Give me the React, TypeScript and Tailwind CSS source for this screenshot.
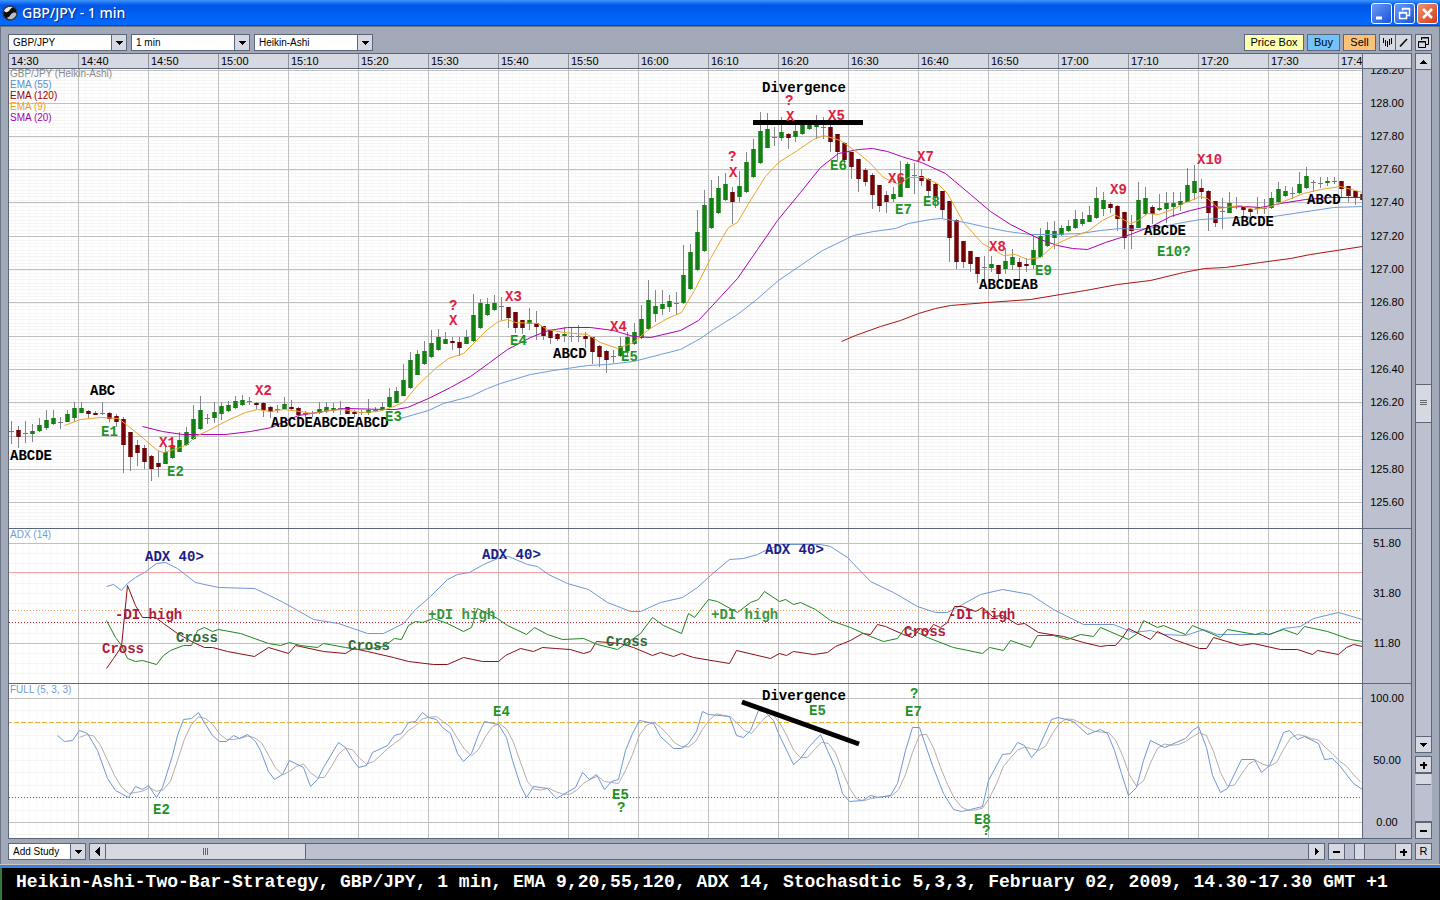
import { useState, type ReactNode } from 'react';

type Point = [number, number];
type Candle = [string, number, number, number, number];
type Note = [string, number, number, string];

const RED = '#e0203f';
const GREEN = '#1f941f';
const BLACK = '#000000';
const NAVY = '#1c1c8a';
const MAROON = '#b01c3c';
const LEAF = '#3a9442';
const PINE = '#2f6b38';

const STEP = 7;
const PLOT_LEFT = 9;
const MAJOR = '#c0c0c0';
const MINOR = '#f5f5f5';

const times = [
  '14:30', '14:40', '14:50', '15:00', '15:10', '15:20', '15:30', '15:40', '15:50', '16:00',
  '16:10', '16:20', '16:30', '16:40', '16:50', '17:00', '17:10', '17:20', '17:30', '17:40',
];

// kind (g up, r down, d doji), wick top, body top, body bottom, wick bottom
const candles: Candle[] = [
  ['d', 421, 431, 432, 444], ['r', 426, 430, 437, 448], ['d', 421, 433, 434, 443], ['g', 424, 431, 434, 442],
  ['g', 418, 425, 431, 432], ['g', 410, 420, 428, 430], ['g', 410, 418, 424, 425], ['d', 417, 422, 423, 429],
  ['g', 410, 414, 422, 422], ['g', 402, 408, 418, 422], ['g', 402, 408, 413, 413], ['r', 410, 411, 414, 418],
  ['r', 411, 413, 415, 415], ['d', 402, 413, 414, 415], ['r', 412, 413, 419, 422], ['r', 414, 416, 422, 427],
  ['r', 417, 419, 445, 473], ['r', 432, 432, 457, 471], ['r', 440, 445, 453, 466], ['r', 445, 448, 462, 469],
  ['r', 455, 456, 469, 481], ['r', 451, 463, 467, 477], ['g', 445, 452, 464, 464], ['g', 441, 445, 458, 459],
  ['g', 432, 440, 452, 452], ['g', 427, 432, 445, 446], ['g', 405, 419, 439, 440], ['g', 396, 410, 429, 430],
  ['d', 414, 418, 419, 424], ['g', 402, 412, 418, 423], ['g', 402, 406, 414, 420], ['g', 401, 405, 411, 412],
  ['g', 396, 401, 408, 409], ['g', 395, 400, 405, 406], ['d', 397, 401, 402, 405], ['r', 402, 403, 405, 409],
  ['r', 402, 403, 410, 417], ['r', 406, 407, 412, 418], ['d', 405, 409, 410, 413], ['g', 397, 404, 409, 410],
  ['r', 400, 407, 409, 411], ['r', 407, 408, 415, 417], ['d', 411, 413, 414, 417], ['d', 411, 413, 414, 417],
  ['g', 402, 409, 413, 414], ['g', 402, 407, 411, 413], ['g', 403, 408, 410, 413], ['d', 401, 408, 409, 415],
  ['r', 407, 407, 414, 414], ['r', 410, 412, 414, 417], ['d', 410, 412, 413, 415], ['g', 399, 410, 413, 415],
  ['d', 407, 410, 411, 412], ['g', 402, 407, 409, 411], ['g', 388, 397, 407, 408], ['g', 387, 391, 403, 403],
  ['g', 364, 380, 396, 396], ['g', 352, 360, 388, 389], ['g', 350, 354, 375, 375], ['g', 341, 351, 364, 365],
  ['g', 330, 343, 357, 358], ['g', 329, 337, 350, 351], ['g', 332, 339, 344, 344], ['r', 337, 341, 343, 350],
  ['r', 337, 342, 348, 356], ['g', 330, 337, 344, 344], ['g', 294, 315, 341, 342], ['g', 299, 303, 328, 329],
  ['g', 298, 304, 315, 316], ['g', 295, 303, 310, 311], ['d', 297, 306, 307, 320], ['r', 307, 307, 318, 328],
  ['r', 312, 312, 328, 333], ['r', 320, 320, 328, 334], ['g', 308, 320, 324, 330], ['r', 311, 323, 327, 340],
  ['r', 326, 326, 336, 340], ['r', 330, 330, 338, 344], ['r', 333, 334, 339, 341], ['g', 327, 334, 336, 342],
  ['d', 328, 336, 337, 342], ['d', 325, 336, 337, 342], ['r', 332, 336, 339, 348], ['r', 337, 337, 352, 364],
  ['r', 345, 346, 357, 367], ['r', 350, 351, 360, 373], ['d', 350, 356, 357, 363], ['g', 337, 346, 356, 357],
  ['g', 332, 337, 351, 356], ['g', 323, 332, 344, 345], ['g', 305, 319, 338, 339], ['g', 280, 300, 329, 330],
  ['g', 290, 306, 314, 322], ['g', 290, 304, 309, 315], ['g', 295, 301, 307, 312], ['d', 292, 303, 304, 315],
  ['g', 245, 275, 303, 304], ['g', 244, 252, 289, 290], ['g', 210, 232, 270, 271], ['g', 190, 205, 251, 252],
  ['g', 180, 198, 228, 229], ['g', 176, 188, 213, 214], ['g', 173, 184, 200, 201], ['r', 187, 192, 202, 224],
  ['g', 171, 186, 197, 202], ['g', 152, 162, 192, 193], ['g', 139, 149, 177, 178], ['g', 112, 131, 163, 164],
  ['g', 113, 129, 148, 148], ['d', 127, 137, 138, 146], ['g', 117, 132, 138, 141], ['r', 133, 134, 138, 149],
  ['g', 120, 131, 137, 142], ['g', 120, 123, 134, 135], ['g', 120, 124, 129, 130], ['g', 115, 125, 127, 139],
  ['d', 117, 127, 128, 139], ['r', 125, 127, 142, 152], ['r', 134, 134, 152, 160], ['r', 142, 143, 160, 167],
  ['r', 152, 152, 167, 179], ['r', 159, 159, 179, 192], ['r', 168, 170, 182, 186], ['r', 173, 175, 195, 209],
  ['r', 185, 185, 206, 212], ['r', 191, 195, 202, 213], ['g', 187, 194, 199, 202], ['g', 161, 177, 197, 197],
  ['g', 162, 164, 188, 188], ['d', 163, 175, 176, 194], ['r', 169, 176, 181, 186], ['r', 178, 179, 191, 198],
  ['r', 183, 184, 198, 208], ['r', 191, 191, 210, 218], ['r', 201, 201, 238, 262], ['r', 219, 220, 262, 269],
  ['r', 241, 241, 262, 268], ['r', 251, 251, 264, 272], ['r', 257, 257, 274, 283], ['d', 256, 267, 268, 282],
  ['g', 256, 264, 268, 272], ['r', 265, 265, 274, 282], ['g', 248, 261, 269, 274], ['g', 249, 257, 265, 270],
  ['r', 258, 262, 267, 280], ['r', 258, 264, 266, 272], ['g', 236, 250, 265, 269], ['g', 228, 236, 257, 258],
  ['g', 222, 230, 246, 247], ['g', 221, 231, 238, 249], ['g', 225, 228, 235, 236], ['g', 220, 226, 231, 232],
  ['g', 210, 219, 228, 229], ['g', 212, 219, 224, 226], ['g', 206, 215, 222, 222], ['g', 187, 198, 218, 219],
  ['g', 192, 200, 209, 216], ['r', 202, 204, 208, 213], ['r', 205, 206, 219, 231], ['r', 212, 212, 238, 249],
  ['r', 215, 225, 231, 249], ['g', 182, 200, 228, 228], ['g', 187, 198, 214, 215], ['r', 205, 207, 214, 224],
  ['g', 194, 208, 210, 211], ['g', 192, 203, 209, 223], ['g', 192, 203, 207, 217], ['g', 192, 201, 205, 211],
  ['g', 168, 185, 202, 202], ['g', 165, 181, 193, 200], ['r', 179, 188, 192, 199], ['r', 190, 191, 213, 231],
  ['r', 201, 201, 223, 227], ['d', 198, 211, 212, 229], ['g', 192, 203, 213, 213], ['d', 197, 206, 207, 209],
  ['r', 206, 207, 210, 216], ['r', 208, 209, 212, 216], ['d', 197, 208, 209, 214], ['d', 199, 208, 209, 214],
  ['g', 192, 198, 208, 209], ['g', 182, 189, 202, 203], ['g', 186, 191, 196, 197], ['d', 187, 193, 194, 199],
  ['g', 172, 184, 193, 194], ['g', 167, 176, 188, 189], ['d', 180, 182, 183, 192], ['d', 177, 183, 184, 188],
  ['g', 177, 181, 183, 186], ['d', 177, 181, 182, 184], ['r', 181, 181, 189, 198], ['r', 186, 186, 196, 202],
  ['r', 190, 191, 198, 205], ['r', 194, 194, 200, 200],
];

const ema9: Point[] = [
  [64, 425], [80, 419], [100, 417], [118, 418], [127, 425], [143, 438], [157, 450], [163, 452], [177, 448],
  [187, 444], [195, 436], [208, 430], [227, 420], [245, 412], [257, 409], [270, 411], [283, 409], [300, 411],
  [313, 413], [328, 410], [343, 409], [360, 412], [377, 411], [388, 408], [403, 402], [417, 385], [435, 368],
  [448, 358], [463, 353], [473, 343], [487, 329], [498, 321], [507, 319], [515, 322], [537, 323], [547, 329],
  [563, 332], [587, 334], [600, 342], [617, 348], [633, 342], [647, 330], [653, 326], [667, 318], [681, 312],
  [695, 288], [710, 258], [722, 237], [728, 227], [737, 222], [748, 203], [765, 176], [778, 162], [797, 150],
  [813, 139], [823, 135], [840, 140], [857, 152], [870, 163], [883, 177], [898, 184], [908, 177], [923, 177],
  [937, 183], [947, 193], [963, 222], [982, 243], [1003, 255], [1015, 254], [1027, 259], [1040, 257],
  [1053, 245], [1070, 237], [1087, 231], [1102, 220], [1114, 214], [1130, 223], [1138, 220], [1147, 213],
  [1158, 214], [1175, 208], [1183, 203], [1200, 196], [1207, 198], [1218, 208], [1240, 205], [1253, 209],
  [1267, 207], [1283, 201], [1303, 193], [1320, 189], [1340, 186], [1362, 192],
];

const sma20: Point[] = [
  [142, 426], [162, 431], [182, 434], [225, 434], [250, 431], [271, 427], [298, 415], [330, 410], [345, 408],
  [385, 409], [395, 409], [407, 407], [428, 398], [450, 387], [470, 376], [488, 363], [507, 349], [530, 337],
  [548, 330], [567, 327], [590, 327], [613, 330], [633, 336], [650, 337], [680, 330], [698, 320], [712, 305],
  [737, 278], [757, 249], [777, 220], [800, 192], [820, 167], [838, 153], [858, 149], [872, 148], [887, 151],
  [901, 156], [921, 162], [945, 173], [970, 194], [990, 211], [1010, 224], [1040, 239], [1057, 245],
  [1072, 248], [1087, 249], [1105, 242], [1130, 234], [1153, 225], [1170, 216], [1190, 210], [1207, 206],
  [1225, 207], [1243, 206], [1260, 207], [1280, 203], [1305, 199], [1330, 197], [1362, 197],
];

const ema55: Point[] = [
  [400, 418], [428, 410], [443, 403], [470, 396], [487, 388], [500, 383], [530, 374], [553, 370], [587, 365],
  [607, 364], [633, 361], [660, 354], [680, 349], [700, 338], [713, 329], [737, 314], [755, 300], [778, 280],
  [800, 265], [822, 250], [853, 235], [873, 231], [895, 228], [908, 223], [930, 219], [940, 218], [965, 222],
  [987, 227], [1007, 231], [1030, 234], [1053, 234], [1080, 233], [1100, 230], [1120, 228], [1137, 229],
  [1163, 226], [1177, 223], [1200, 219], [1237, 217], [1273, 216], [1300, 212], [1333, 207], [1362, 206],
];

const ema120: Point[] = [
  [841, 341], [855, 335], [880, 326], [900, 320], [918, 313], [935, 308], [950, 305], [987, 302], [1030, 299],
  [1060, 294], [1085, 290], [1117, 284], [1150, 280], [1183, 272], [1204, 268], [1225, 267], [1260, 262],
  [1290, 258], [1310, 254], [1362, 246],
];

const adx: Point[] = [
  [106, 586], [113, 584], [121, 590], [127, 583], [135, 577], [144, 572], [156, 563], [165, 562], [177, 568],
  [195, 582], [218, 587], [254, 588], [267, 594], [283, 602], [313, 619], [338, 623], [367, 633], [383, 633],
  [403, 623], [415, 609], [430, 596], [447, 579], [457, 574], [469, 572], [483, 564], [497, 558], [508, 556],
  [527, 564], [537, 566], [548, 574], [567, 583], [588, 589], [607, 602], [630, 611], [640, 611], [660, 602],
  [682, 597], [697, 587], [710, 575], [729, 559], [743, 558], [757, 554], [765, 550], [780, 544], [820, 544],
  [830, 546], [847, 557], [870, 581], [893, 592], [917, 606], [935, 612], [947, 612], [962, 604], [980, 594],
  [1002, 589], [1030, 594], [1053, 609], [1083, 624], [1113, 624], [1133, 632], [1150, 630], [1163, 634],
  [1185, 635], [1203, 629], [1217, 634], [1253, 634], [1270, 634], [1283, 628], [1300, 626], [1313, 618],
  [1338, 612], [1362, 619],
];

const minusDi: Point[] = [
  [106, 668], [113, 658], [121, 646], [127, 585], [135, 605], [142, 617], [155, 617], [163, 623], [177, 633],
  [193, 642], [204, 647], [212, 647], [227, 651], [254, 656], [268, 647], [288, 653], [295, 645], [323, 651],
  [345, 653], [353, 648], [367, 651], [393, 657], [408, 661], [433, 664], [447, 664], [463, 657], [482, 661],
  [498, 661], [505, 655], [520, 648], [533, 651], [542, 647], [555, 648], [570, 649], [583, 653], [590, 651],
  [596, 641], [620, 643], [633, 647], [652, 655], [660, 652], [673, 656], [681, 653], [693, 657], [729, 663],
  [736, 650], [770, 658], [779, 653], [786, 655], [793, 651], [813, 654], [827, 652], [835, 646], [850, 640],
  [862, 633], [870, 634], [877, 624], [885, 626], [903, 634], [912, 637], [920, 628], [927, 632], [933, 624],
  [940, 627], [947, 622], [954, 606], [962, 606], [975, 611], [982, 607], [992, 616], [1002, 615], [1017, 624],
  [1024, 623], [1038, 632], [1063, 636], [1083, 642], [1100, 646], [1107, 645], [1115, 645], [1122, 637],
  [1128, 628], [1150, 639], [1157, 631], [1173, 639], [1199, 648], [1206, 648], [1213, 637], [1240, 645],
  [1253, 643], [1280, 649], [1297, 649], [1312, 654], [1317, 650], [1338, 654], [1346, 647], [1353, 644],
  [1362, 646],
];

const plusDi: Point[] = [
  [106, 620], [115, 637], [121, 645], [127, 658], [135, 661], [142, 660], [156, 664], [163, 655], [170, 650],
  [183, 645], [191, 645], [197, 630], [204, 627], [212, 631], [218, 629], [240, 633], [268, 643], [280, 645],
  [289, 642], [300, 645], [317, 647], [323, 643], [345, 647], [357, 649], [370, 648], [383, 646], [394, 638],
  [401, 639], [408, 625], [415, 621], [422, 622], [433, 618], [447, 623], [463, 631], [471, 627], [477, 608],
  [497, 618], [507, 625], [526, 634], [534, 627], [547, 634], [562, 639], [583, 638], [597, 644], [617, 649],
  [630, 640], [640, 633], [652, 617], [663, 625], [681, 633], [688, 613], [694, 617], [708, 599], [717, 601],
  [737, 612], [750, 602], [758, 599], [764, 591], [779, 601], [785, 599], [793, 604], [800, 602], [815, 609],
  [830, 620], [850, 627], [870, 636], [883, 641], [897, 638], [905, 627], [917, 632], [927, 637], [953, 647],
  [982, 653], [989, 647], [1003, 650], [1010, 640], [1030, 647], [1037, 635], [1053, 635], [1067, 639],
  [1080, 634], [1093, 636], [1100, 627], [1128, 639], [1137, 633], [1143, 620], [1157, 627], [1163, 625],
  [1185, 634], [1192, 625], [1220, 637], [1227, 629], [1255, 634], [1262, 632], [1268, 634], [1283, 629],
  [1297, 634], [1304, 626], [1327, 631], [1350, 639], [1362, 641],
];

const stochK: Point[] = [
  [57, 735], [64, 741], [72, 740], [79, 730], [87, 733], [97, 750], [107, 778], [115, 790], [128, 797],
  [135, 786], [142, 789], [148, 785], [156, 797], [162, 787], [172, 755], [177, 735], [183, 719], [191, 718],
  [198, 712], [205, 724], [212, 735], [219, 741], [226, 741], [233, 735], [239, 738], [247, 734], [255, 741],
  [260, 750], [268, 771], [274, 779], [282, 774], [289, 760], [303, 767], [310, 786], [317, 779], [323, 767],
  [338, 742], [345, 747], [352, 759], [358, 767], [366, 765], [372, 752], [387, 745], [394, 735], [401, 733],
  [408, 722], [415, 721], [422, 712], [428, 717], [436, 719], [442, 727], [450, 733], [457, 753], [463, 761],
  [471, 753], [478, 734], [484, 721], [498, 724], [506, 737], [512, 760], [520, 785], [526, 797], [533, 786],
  [547, 788], [556, 798], [568, 791], [575, 787], [582, 772], [589, 779], [596, 774], [604, 789], [611, 781],
  [618, 779], [625, 750], [632, 733], [639, 720], [653, 723], [660, 736], [673, 748], [681, 748], [688, 743],
  [696, 731], [702, 711], [708, 714], [729, 716], [736, 735], [743, 737], [750, 730], [758, 710], [765, 712],
  [773, 720], [778, 733], [793, 764], [800, 758], [808, 747], [820, 734], [827, 750], [835, 768], [842, 793],
  [849, 801], [862, 800], [870, 795], [878, 797], [890, 795], [897, 783], [905, 750], [912, 727], [919, 727],
  [932, 765], [943, 793], [953, 809], [961, 811], [970, 809], [982, 806], [988, 780], [1002, 754], [1010, 753],
  [1017, 742], [1024, 745], [1031, 757], [1037, 750], [1051, 719], [1058, 717], [1073, 721], [1087, 734],
  [1100, 729], [1107, 733], [1114, 750], [1121, 773], [1128, 795], [1136, 787], [1143, 760], [1150, 740],
  [1164, 747], [1185, 738], [1192, 730], [1198, 726], [1206, 747], [1212, 775], [1220, 792], [1227, 788],
  [1241, 759], [1254, 759], [1261, 772], [1269, 765], [1276, 750], [1283, 732], [1289, 730], [1297, 739],
  [1304, 736], [1318, 743], [1324, 759], [1332, 758], [1339, 765], [1353, 783], [1362, 789],
];

const priceNotes: Note[] = [
  ['ABCDE', 10, 460, BLACK], ['ABC', 90, 395, BLACK], ['E1', 101, 436, GREEN], ['X1', 159, 447, RED],
  ['E2', 167, 476, GREEN], ['X2', 255, 395, RED], ['ABCDEABCDEABCD', 271, 427, BLACK], ['E3', 385, 421, GREEN],
  ['?', 449, 310, RED], ['X', 449, 325, RED], ['X3', 505, 301, RED], ['E4', 510, 345, GREEN],
  ['ABCD', 553, 358, BLACK], ['X4', 610, 331, RED], ['E5', 621, 361, GREEN], ['Divergence', 762, 92, BLACK],
  ['?', 785, 105, RED], ['?', 728, 161, RED], ['X', 729, 177, RED],
  ['X5', 828, 120, RED], ['E6', 830, 170, GREEN], ['X6', 888, 183, RED], ['X7', 917, 161, RED],
  ['E7', 895, 214, GREEN], ['E8', 923, 206, GREEN], ['X8', 989, 251, RED], ['E9', 1035, 275, GREEN],
  ['ABCDEAB', 979, 289, BLACK], ['X9', 1110, 194, RED], ['ABCDE', 1144, 235, BLACK],
  ['E10?', 1157, 256, GREEN], ['X10', 1197, 164, RED], ['ABCDE', 1232, 226, BLACK], ['ABCD', 1307, 204, BLACK],
  ['X', 786, 121, RED],
];

const adxNotes: Note[] = [
  ['ADX 40>', 145, 561, NAVY], ['ADX 40>', 482, 559, NAVY], ['ADX 40>', 765, 554, NAVY],
  ['-DI high', 115, 619, MAROON], ['Cross', 102, 653, MAROON], ['Cross', 176, 642, PINE],
  ['Cross', 348, 650, PINE], ['+DI high', 428, 619, LEAF], ['Cross', 606, 646, PINE],
  ['+DI high', 711, 619, LEAF], ['Cross', 904, 636, MAROON], ['-DI high', 948, 619, MAROON],
];

const stochNotes: Note[] = [
  ['E2', 153, 814, GREEN], ['E4', 493, 716, GREEN], ['E5', 612, 799, GREEN], ['?', 617, 812, GREEN],
  ['Divergence', 762, 700, BLACK], ['E5', 809, 715, GREEN], ['?', 910, 698, GREEN], ['E7', 905, 716, GREEN],
  ['E8', 974, 824, GREEN], ['?', 982, 835, GREEN],
];

const priceLevels = [
  70, 103, 136, 169, 202, 236, 269, 302, 336, 369, 402, 436, 469, 502,
].map((y, i) => ({ y, label: (128.2 - i * 0.2).toFixed(2) }));

const toPath = (points: Point[]) => points.map(([x, y], i) => `${i ? 'L' : 'M'}${x + 0.5} ${y + 0.5}`).join('');

const valueAt = (points: Point[], x: number) => {
  const i = Math.max(1, points.findIndex((p) => p[0] >= x));
  const [x0, y0] = points[i - 1];
  const [x1, y1] = points[i];
  return y0 + ((x - x0) / (x1 - x0)) * (y1 - y0);
};

// %D is the 3-bar average of %K
const stochD: Point[] = [];
for (let x = 79; x <= 1362; x += STEP) {
  stochD.push([x, (valueAt(stochK, x) + valueAt(stochK, x - STEP) + valueAt(stochK, x - 2 * STEP)) / 3]);
}

const range = (n: number) => Array.from({ length: n }, (_, i) => i);

function Line({ points, color }: { points: Point[]; color: string }) {
  return <path d={toPath(points)} fill="none" stroke={color} strokeWidth="1" />;
}

function Level({ y, color, dash }: { y: number; color: string; dash?: string }) {
  return <path d={`M0 ${y + 0.5}H4000`} stroke={color} strokeDasharray={dash} />;
}

function Notes({ items }: { items: Note[] }) {
  return (
    <g className="font-['Liberation_Mono',monospace] text-sm font-bold">
      {items.map(([text, x, y, color]) => (
        <text key={`${x}-${y}`} x={x} y={y} fill={color}>{text}</text>
      ))}
    </g>
  );
}

function CandleBar({ candle, x }: { candle: Candle; x: number }) {
  const [kind, high, top, bottom, low] = candle;
  const height = Math.max(2, bottom - top);
  const up = kind === 'g';
  return (
    <g shapeRendering="crispEdges">
      <rect x={x} y={high} width="1" height={low - high} fill="#85858d" />
      {kind === 'd' ? (
        <rect x={x - 2} y={top} width="5" height="1" fill="#77777f" />
      ) : (
        <>
          <rect x={x - 2} y={top} width="5" height={height} fill={up ? '#4f964f' : '#8c4648'} />
          <rect x={x - 1} y={top} width="3" height={height} fill={up ? '#0f820f' : '#760004'} />
        </>
      )}
    </g>
  );
}

interface PanelProps {
  title: string;
  top: number;
  levels: { y: number; label: string; line?: boolean }[];
  minorStep: number;
  className: string;
  children: ReactNode;
}

function Panel({ title, top, levels, minorStep, className, children }: PanelProps) {
  return (
    <section className={`flex border-b border-[#5b667b] ${className}`} aria-label={title}>
      <div className="min-w-0 flex-1 overflow-hidden bg-white">
        <svg className="block h-full w-full" role="img" aria-label={title}>
          <g transform={`translate(${-PLOT_LEFT} ${-top})`}>
            {range(200).map((i) => (
              <path key={i} d={`M${15.5 + i * STEP} ${top}v1000`} stroke={MINOR} strokeOpacity="0.6" />
            ))}
            {range(Math.ceil(460 / minorStep)).map((i) => (
              <path key={i} d={`M0 ${Math.round(levels[0].y + i * minorStep) + 0.5}H4000`} stroke={MINOR} />
            ))}
            {range(19).map((i) => (
              <path key={i} d={`M${78.5 + i * 70} ${top}v1000`} stroke={MAJOR} />
            ))}
            {levels.filter((l) => l.line !== false).map((l) => <Level key={l.y} y={l.y} color={MAJOR} />)}
            {children}
          </g>
        </svg>
      </div>
      <div className="w-[49px] border-l border-[#5b667b] bg-[#bcc0cf]">
        <svg className="block h-full w-full text-[11px]">
          {levels.map((l) => (
            <text key={l.y} x="24" y={l.y - top + 4} textAnchor="middle">{l.label}</text>
          ))}
        </svg>
      </div>
    </section>
  );
}

function Arrow({ d }: { d: string }) {
  return (
    <svg width="9" height="9" viewBox="0 0 9 9" shapeRendering="crispEdges"><path d={d} /></svg>
  );
}

const UP = 'M1 7L4.5 2.5L8 7Z';
const DOWN = 'M0 2.5H9L4.5 7Z';
const LEFT = 'M6.500 0V9L2 4.500Z';
const RIGHT = 'M2.500 0V9L7 4.500Z';
const PLUS = 'M1 4h7v2H1zM3.500 1.500h2v7h-2z';
const MINUS = 'M1 4h7v2H1z';

interface DropDownProps {
  label: string;
  options: string[];
  className: string;
}

function DropDown({ label, options, className }: DropDownProps) {
  const [value, setValue] = useState(options[0]);
  return (
    <div className={`relative h-[17px] border border-[#5b667b] bg-white ${className}`}>
      <select
        aria-label={label}
        value={value}
        onChange={(e) => setValue(e.target.value)}
        className="block h-full w-full appearance-none pl-1 text-[10px] leading-[15px] outline-none"
      >
        {options.map((o) => <option key={o}>{o}</option>)}
      </select>
      <span className="pointer-events-none absolute inset-y-0 right-0 flex w-[15px] items-center justify-center border-l border-[#5b667b] bg-[#d6d9e1]">
        <Arrow d={DOWN} />
      </span>
    </div>
  );
}

function SmallButton({ label, children }: { label: string; children: ReactNode }) {
  return (
    <button aria-label={label} className="flex size-[17px] shrink-0 items-center justify-center border border-[#5b667b] bg-[#d6d9e1] hover:bg-white">
      {children}
    </button>
  );
}

function WindowButton({ label, className, children }: { label: string; className: string; children: ReactNode }) {
  return (
    <button aria-label={label} className={`flex size-[21px] items-center justify-center rounded-[3px] border border-white ${className}`}>
      <svg width="19" height="19" viewBox="0 0 19 19" fill="none" stroke="white">{children}</svg>
    </button>
  );
}

function TitleBar() {
  return (
    <header className="flex h-[26px] shrink-0 items-center justify-between bg-linear-to-b from-[#3d95ff] via-[#0055e5] via-20% to-[#0468ff] to-85% pr-0.5 pl-0.5 shadow-[inset_0_-1px_0_#0046c8]">
      <div className="flex items-center gap-1">
        <svg width="16" height="16" viewBox="0 0 16 16">
          <circle cx="8" cy="8" r="7.500" fill="#0a0a0a" />
          <path d="M2 5.500C4 2 8 1 11 2.500C8 3 8 6 5.500 7C4 7.600 2.500 7 2 5.500Z" fill="#e8e8e8" />
          <path d="M5 12.500C8 12.500 8 9 10.500 8C12.500 7.200 14 7.500 14.500 9C14 12 11 14.500 8 14.300C6.500 14 5.500 13.500 5 12.500Z" fill="#b9bcc4" />
          <circle cx="8" cy="8" r="7" fill="none" stroke="#444c60" />
        </svg>
        <h1 className="font-['Noto_Sans','Open_Sans',sans-serif] text-sm leading-5 font-medium text-white [text-shadow:1px_1px_1px_#0a2a80]">
          GBP/JPY - 1 min
        </h1>
      </div>
      <div className="flex gap-0.5">
        <WindowButton label="Minimize" className="bg-linear-to-br from-[#6a9cf8] to-[#1c4fd8]">
          <path d="M4 14H10" strokeWidth="3" />
        </WindowButton>
        <WindowButton label="Restore" className="bg-linear-to-br from-[#6a9cf8] to-[#1c4fd8]">
          <path d="M7.500 6.500V4.500H14.500V11.500H12M7 5H15M4.500 8.500H11.500V14.500H4.500ZM4 9H12" strokeWidth="1.500" />
        </WindowButton>
        <WindowButton label="Close" className="bg-linear-to-br from-[#f09070] to-[#d03a10]">
          <path d="M5 5L14 14M14 5L5 14" strokeWidth="2.500" />
        </WindowButton>
      </div>
    </header>
  );
}

function Toolbar() {
  return (
    <div className="flex shrink-0 justify-between">
      <div className="flex gap-1">
        <DropDown label="Currency pair" options={['GBP/JPY', 'EUR/USD', 'USD/JPY']} className="w-[119px]" />
        <DropDown label="Interval" options={['1 min', '5 min', '1 hour']} className="w-[119px]" />
        <DropDown label="Chart type" options={['Heikin-Ashi', 'Candlestick', 'Line']} className="w-[119px]" />
      </div>
      <div className="flex gap-[3px] text-[11px] leading-[15px]">
        <button className="w-[60px] border border-[#5b667b] bg-[#ffffb0]">Price Box</button>
        <button className="w-[33px] border border-[#5b667b] bg-[#73c2fa]">Buy</button>
        <button className="w-[33px] border border-[#5b667b] bg-[#fdc27a]">Sell</button>
        <div className="flex -space-x-px">
          <SmallButton label="Bar style">
            <svg width="13" height="11" viewBox="0 0 13 11" stroke="black">
              <path d="M2.500 1V6M4.500 3V9M6.500 4V10M8.500 2V8M10.500 1V7" />
            </svg>
          </SmallButton>
          <SmallButton label="Draw line">
            <svg width="11" height="11" viewBox="0 0 11 11" stroke="black" strokeWidth="1.500">
              <path d="M2 9.500L9 2" />
            </svg>
          </SmallButton>
        </div>
        <SmallButton label="Pop out">
          <svg width="13" height="13" viewBox="0 0 13 13" fill="none" stroke="black">
            <path d="M4.500 4V1.500H11.500V8.500H9M4 2H12" />
            <path d="M1.500 5.500H8.500V11.500H1.500ZM1 6H9" />
          </svg>
        </SmallButton>
      </div>
    </div>
  );
}

function TimeAxis() {
  return (
    <div className="flex h-[15px] shrink-0 border-b border-[#5b667b] bg-[#d6d9e1] text-[11px] leading-[14px]">
      <div className="flex min-w-0 flex-1 overflow-hidden">
        {times.map((t) => (
          <span key={t} className="w-[70px] shrink-0 border-r border-[#8b93a3] pl-0.5">{t}</span>
        ))}
      </div>
      <div className="w-[49px] border-l border-[#5b667b]" />
    </div>
  );
}

function Chart() {
  return (
    <main className="flex min-w-0 flex-1 flex-col border border-b-0 border-[#5b667b]">
      <TimeAxis />
      <Panel title="Price" top={69} levels={priceLevels} minorStep={3.325} className="min-h-0 flex-1">
        {candles.map((candle, i) => <CandleBar key={i} candle={candle} x={11 + i * STEP} />)}
        <Line points={ema55} color="#6f9bdc" />
        <Line points={ema120} color="#b01212" />
        <Line points={sma20} color="#b000b0" />
        <Line points={ema9} color="#e8a52c" />
        <path d="M753 122.500H863" stroke="black" strokeWidth="5" />
        <g className="text-[10px]">
          <text x="10" y="77" fill="#8a8a8a">GBP/JPY (Heikin-Ashi)</text>
          <text x="10" y="88" fill="#5b8fd0">EMA (55)</text>
          <text x="10" y="99" fill="#a00000">EMA (120)</text>
          <text x="10" y="110" fill="#eaa21e">EMA (9)</text>
          <text x="10" y="121" fill="#a800a8">SMA (20)</text>
        </g>
        <Notes items={priceNotes} />
      </Panel>
      <Panel
        title="ADX (14)"
        top={529}
        levels={[{ y: 543, label: '51.80' }, { y: 593, label: '31.80', line: false }, { y: 643, label: '11.80' }]}
        minorStep={10}
        className="h-[155px] shrink-0"
      >
        <Level y={572} color="#f7a3a6" />
        <Level y={610} color="#f0a860" dash="1 2" />
        <Level y={622} color="#b02030" dash="1 2" />
        <Line points={adx} color="#6f96d6" />
        <Line points={minusDi} color="#8b0f14" />
        <Line points={plusDi} color="#1f861f" />
        <text x="10" y="538" fill="#6f9bdc" className="text-[10px]">ADX (14)</text>
        <Notes items={adxNotes} />
      </Panel>
      <Panel
        title="FULL (5, 3, 3)"
        top={684}
        levels={[{ y: 698, label: '100.00' }, { y: 760, label: '50.00', line: false }, { y: 822, label: '0.00' }]}
        minorStep={12.4}
        className="h-[155px] shrink-0"
      >
        <Level y={722} color="#e0b23c" dash="5 2" />
        <Level y={797} color="#b030b0" dash="1 2" />
        <Line points={stochD} color="#b5acab" />
        <Line points={stochK} color="#6f96d6" />
        <path d="M742 702L859 744" stroke="black" strokeWidth="5" />
        <text x="10" y="693" fill="#6f9bdc" className="text-[10px]">FULL (5, 3, 3)</text>
        <Notes items={stochNotes} />
      </Panel>
    </main>
  );
}

function RightRail() {
  return (
    <div className="flex w-[17px] shrink-0 flex-col gap-[3px]">
      <div className="flex flex-1 flex-col border-x border-[#5b667b] bg-[#bcc0cf]">
        <div className="-mx-px"><SmallButton label="Scroll up"><Arrow d={UP} /></SmallButton></div>
        <div className="flex flex-1 flex-col justify-center">
          <div className="flex h-[39px] items-center justify-center border-y border-[#5b667b] bg-[#d6d9e1]">
            <svg width="7" height="6" viewBox="0 0 7 6" stroke="#666"><path d="M0 .5H7M0 2.500H7M0 4.500H7" /></svg>
          </div>
        </div>
        <div className="-mx-px"><SmallButton label="Scroll down"><Arrow d={DOWN} /></SmallButton></div>
      </div>
      <div className="flex h-[83px] flex-col">
        <SmallButton label="Zoom in vertically"><Arrow d={PLUS} /></SmallButton>
        <input
          type="range"
          aria-label="Vertical zoom"
          defaultValue="0"
          className="m-0 min-h-0 w-[17px] flex-1 appearance-none border-x border-[#5b667b] bg-[#bcc0cf] [writing-mode:vertical-lr] [&::-webkit-slider-thumb]:h-[11px] [&::-webkit-slider-thumb]:w-[15px] [&::-webkit-slider-thumb]:appearance-none [&::-webkit-slider-thumb]:border-b [&::-webkit-slider-thumb]:border-[#5b667b] [&::-webkit-slider-thumb]:bg-[#d6d9e1]"
        />
        <SmallButton label="Zoom out vertically"><Arrow d={MINUS} /></SmallButton>
      </div>
    </div>
  );
}

function BottomBar() {
  return (
    <div className="flex shrink-0 gap-[3px]">
      <DropDown label="Add Study" options={['Add Study', 'EMA', 'SMA', 'ADX']} className="w-[78px]" />
      <div className="flex min-w-0 flex-1 border-y border-[#5b667b] bg-[#bcc0cf]">
        <div className="-my-px"><SmallButton label="Scroll left"><Arrow d={LEFT} /></SmallButton></div>
        <div className="min-w-0 flex-1">
          <div className="flex h-[15px] w-1/6 items-center justify-center border-r border-[#5b667b] bg-[#d6d9e1]">
            <svg width="6" height="7" viewBox="0 0 6 7" stroke="#666"><path d="M.5 0V7M2.500 0V7M4.500 0V7" /></svg>
          </div>
        </div>
        <div className="-my-px"><SmallButton label="Scroll right"><Arrow d={RIGHT} /></SmallButton></div>
      </div>
      <div className="flex w-[84px] shrink-0">
        <SmallButton label="Zoom out"><Arrow d={MINUS} /></SmallButton>
        <input
          type="range"
          aria-label="Horizontal zoom"
          defaultValue="24"
          className="m-0 h-[17px] min-w-0 flex-1 appearance-none border-y border-[#5b667b] bg-[#bcc0cf] [&::-webkit-slider-thumb]:h-[15px] [&::-webkit-slider-thumb]:w-[11px] [&::-webkit-slider-thumb]:appearance-none [&::-webkit-slider-thumb]:border-x [&::-webkit-slider-thumb]:border-[#5b667b] [&::-webkit-slider-thumb]:bg-[#d6d9e1]"
        />
        <SmallButton label="Zoom in"><Arrow d={PLUS} /></SmallButton>
      </div>
      <SmallButton label="Reset"><span className="text-[11px] leading-none">R</span></SmallButton>
    </div>
  );
}

export default function App() {
  return (
    <div className="flex h-screen min-h-[560px] flex-col overflow-hidden bg-[#a1a9b9] font-['Liberation_Sans',Arial,sans-serif] text-black">
      <TitleBar />
      <div className="flex min-h-0 flex-1 flex-col border-x border-t border-[#6c7585] px-[7px] pt-[7px] pb-1">
        <Toolbar />
        <div className="flex min-h-0 flex-1 gap-[3px] pt-0.5 pb-1">
          <Chart />
          <RightRail />
        </div>
        <BottomBar />
      </div>
      <footer className="h-9 shrink-0 border-t border-[#c9c6bc] bg-[#3f7fe0] pt-[3px]">
        <p className="h-full overflow-hidden border-l-2 border-[#2f7a3c] bg-black pl-3.5 font-['Liberation_Mono',monospace] text-lg leading-7 font-bold whitespace-nowrap text-white">
          Heikin-Ashi-Two-Bar-Strategy, GBP/JPY, 1 min, EMA 9,20,55,120, ADX 14, Stochasdtic 5,3,3, February 02, 2009, 14.30-17.30 GMT +1
        </p>
      </footer>
    </div>
  );
}
